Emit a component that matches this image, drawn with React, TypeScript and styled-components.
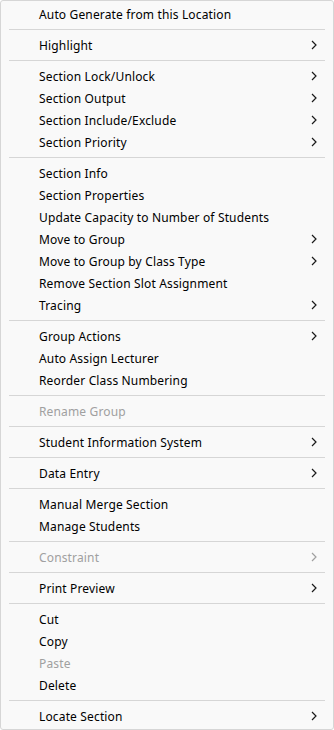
import styled, { createGlobalStyle } from 'styled-components';

const GlobalStyle = createGlobalStyle`
  html, body {
    margin: 0;
    padding: 0;
    background: #ffffff;
  }
  * { box-sizing: border-box; }
`

type Entry =
  | { kind: 'item'; label: string; sub?: boolean; disabled?: boolean }
  | { kind: 'sep' }

const sep: Entry = { kind: 'sep' }
const it = (label: string, sub = false, disabled = false): Entry => ({ kind: 'item', label, sub, disabled })

const entries: Entry[] = [
  it('Auto Generate from this Location'),
  sep,
  it('Highlight', true),
  sep,
  it('Section Lock/Unlock', true),
  it('Section Output', true),
  it('Section Include/Exclude', true),
  it('Section Priority', true),
  sep,
  it('Section Info'),
  it('Section Properties'),
  it('Update Capacity to Number of Students'),
  it('Move to Group', true),
  it('Move to Group by Class Type', true),
  it('Remove Section Slot Assignment'),
  it('Tracing', true),
  sep,
  it('Group Actions', true),
  it('Auto Assign Lecturer'),
  it('Reorder Class Numbering'),
  sep,
  it('Rename Group', false, true),
  sep,
  it('Student Information System', true),
  sep,
  it('Data Entry', true),
  sep,
  it('Manual Merge Section'),
  it('Manage Students'),
  sep,
  it('Constraint', true, true),
  sep,
  it('Print Preview', true),
  sep,
  it('Cut'),
  it('Copy'),
  it('Paste', false, true),
  it('Delete'),
  sep,
  it('Locate Section', true),
]

const Menu = styled.div`
  width: 334px;
  height: 730px;
  background: #f9f9f9;
  border: 1px solid #d6d6d6;
  border-radius: 3px;
  padding: 2px 0;
  display: flex;
  flex-direction: column;
  font-family: "Noto Sans", "Open Sans", sans-serif;
  font-size: 12px;
  letter-spacing: 0.15px;
`

const Item = styled.div<{ $disabled?: boolean }>`
  height: 22px;
  display: flex;
  align-items: center;
  padding-left: 38px;
  padding-right: 16px;
  color: ${p => (p.$disabled ? '#a0a0a0' : '#000000')};
  white-space: nowrap;
`

const Label = styled.span`
  flex: 1;
`

const Separator = styled.div`
  height: 9px;
  display: flex;
  align-items: center;
  padding: 0 8px 0 8px;
  &::after {
    content: '';
    flex: 1;
    height: 1px;
    background: #d6d6d6;
  }
`

const Chevron = ({ color }: { color: string }) => (
  <svg width="6" height="10" viewBox="0 0 6 10">
    <path d="M1 1 L5 5 L1 9" fill="none" stroke={color} strokeWidth="1.2" />
  </svg>
)

export default function App() {
  return (
    <>
      <GlobalStyle />
      <Menu>
        {entries.map((e, i) =>
          e.kind === 'sep' ? (
            <Separator key={i} />
          ) : (
            <Item key={i} $disabled={e.disabled}>
              <Label>{e.label}</Label>
              {e.sub && <Chevron color={e.disabled ? '#a0a0a0' : '#1a1a1a'} />}
            </Item>
          )
        )}
      </Menu>
    </>
  )
}
